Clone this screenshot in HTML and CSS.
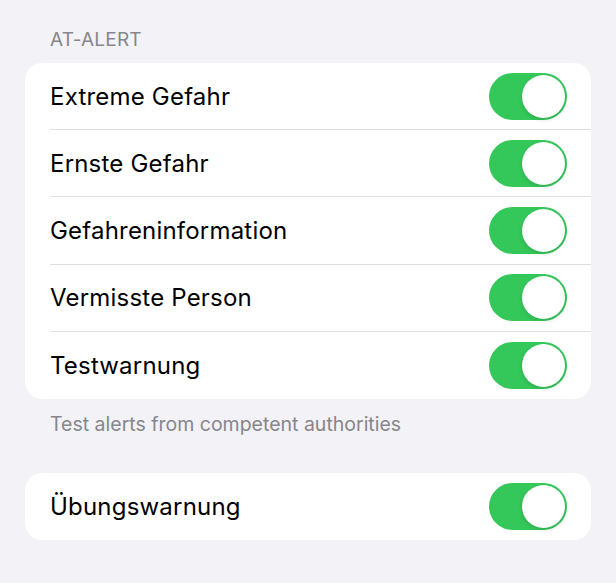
FILE: index.html
```html
<!DOCTYPE html>
<html lang="de">
<head>
<meta charset="utf-8">
<link rel="stylesheet" href="styles.css">
</head>
<body>
<div class="page">
  <div class="section-header">AT-ALERT</div>
  <div class="card">
    <div class="row"><div class="row-inner"><span class="label">Extreme Gefahr</span><span class="toggle"><span class="knob"></span></span></div></div>
    <div class="row"><div class="row-inner"><span class="label">Ernste Gefahr</span><span class="toggle"><span class="knob"></span></span></div></div>
    <div class="row"><div class="row-inner"><span class="label">Gefahreninformation</span><span class="toggle"><span class="knob"></span></span></div></div>
    <div class="row"><div class="row-inner"><span class="label">Vermisste Person</span><span class="toggle"><span class="knob"></span></span></div></div>
    <div class="row"><div class="row-inner"><span class="label">Testwarnung</span><span class="toggle"><span class="knob"></span></span></div></div>
  </div>
  <div class="section-footer">Test alerts from competent authorities</div>
  <div class="card card-second">
    <div class="row"><div class="row-inner"><span class="label">Übungswarnung</span><span class="toggle"><span class="knob"></span></span></div></div>
  </div>
</div>
</body>
</html>
```
FILE: styles.css
```css
html, body {
  margin: 0;
  padding: 0;
  background: #f2f2f7;
}
body {
  font-family: Inter, "Liberation Sans", sans-serif;
  width: 616px;
  height: 583px;
  overflow: hidden;
}
.page {
  padding: 28px 25px 0 25px;
}
.section-header {
  font-size: 19px;
  line-height: 23px;
  color: #86868b;
  padding-left: 25px;
  margin-bottom: 12px;
  letter-spacing: 0.2px;
}
.card {
  background: #ffffff;
  border-radius: 17px;
  overflow: hidden;
}
.row {
  height: 67.2px;
  padding-left: 25px;
}
.row-inner {
  height: 100%;
  box-sizing: border-box;
  display: flex;
  align-items: center;
  justify-content: space-between;
  padding-right: 24px;
  border-bottom: 1px solid #dedee2;
}
.row:last-child .row-inner {
  border-bottom: none;
}
.label {
  font-size: 24px;
  color: #000;
  letter-spacing: 0.2px;
}
.toggle {
  width: 78px;
  height: 47px;
  border-radius: 24px;
  background: #34c759;
  position: relative;
  flex: none;
}
.knob {
  position: absolute;
  top: 2px;
  right: 2px;
  width: 43px;
  height: 43px;
  border-radius: 50%;
  background: #fff;
  box-shadow: 0 2px 4px rgba(0,0,0,0.12);
}
.section-footer {
  font-size: 19.5px;
  line-height: 24px;
  color: #86868b;
  padding-left: 25px;
  margin-top: 13px;
}
.card-second {
  margin-top: 37px;
}
```
